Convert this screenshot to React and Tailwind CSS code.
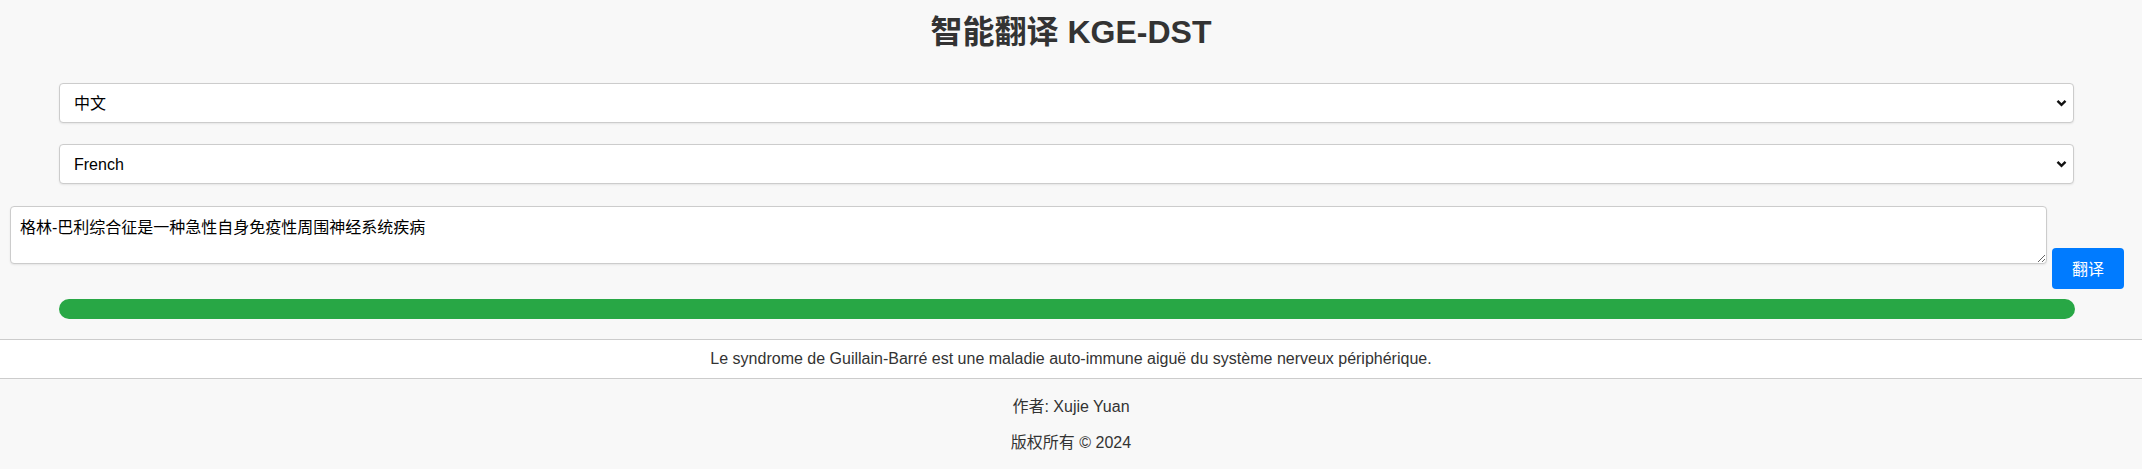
import { useState } from "react";

function Chevron() {
  return (
    <svg
      className="pointer-events-none absolute right-[7px] top-1/2 -translate-y-1/2"
      width="11"
      height="8"
      viewBox="0 0 11 8"
    >
      <path
        d="M1.5 1.8 L5.5 5.8 L9.5 1.8"
        fill="none"
        stroke="#111"
        strokeWidth="2.4"
      />
    </svg>
  );
}

function LangSelect({ value, options, onChange }) {
  return (
    <div className="relative ml-[59px] w-[2015px]">
      <select
        value={value}
        onChange={(e) => onChange(e.target.value)}
        className="block h-[40px] w-full appearance-none rounded-[4px] border border-[#cccccc] bg-white px-[14px] pt-[2px] text-[16px] text-black shadow-[0_1px_2px_rgba(0,0,0,0.08)]"
      >
        {options.map((o) => (
          <option key={o}>{o}</option>
        ))}
      </select>
      <Chevron />
    </div>
  );
}

export default function App() {
  const [source, setSource] = useState("中文");
  const [target, setTarget] = useState("French");
  const [text, setText] = useState(
    "格林-巴利综合征是一种急性自身免疫性周围神经系统疾病"
  );

  return (
    <div
      className="min-h-screen bg-[#f8f8f8] text-[#333333]"
      style={{ fontFamily: '"Liberation Sans", Arial, "Noto Sans CJK SC", sans-serif' }}
    >
      <h1 className="pt-[14px] text-center text-[32px] font-bold leading-[37px]">
        智能翻译 KGE-DST
      </h1>

      <div className="mt-[32px] flex flex-col gap-[21px]">
        <LangSelect
          value={source}
          options={["中文", "English", "French"]}
          onChange={setSource}
        />
        <LangSelect
          value={target}
          options={["French", "English", "中文"]}
          onChange={setTarget}
        />
      </div>

      <div className="mt-[22px] flex items-start gap-[5px] pl-[10px]">
        <textarea
          value={text}
          onChange={(e) => setText(e.target.value)}
          className="block h-[58px] w-[2037px] rounded-[4px] border border-[#cccccc] bg-white pl-[9px] pr-[10px] pt-[11px] pb-[4px] text-[16px] leading-[20px] text-black shadow-[0_1px_2px_rgba(0,0,0,0.08)]"
        />
        <button className="mt-[42px] h-[41px] w-[72px] rounded-[4px] bg-[#007bff] pt-[2px] text-[16px] text-white">
          翻译
        </button>
      </div>

      <div className="ml-[59px] mt-[10px] h-[20px] w-[2016px] rounded-full bg-[#28a745]" />

      <div className="mt-[20px] border-y border-[#cccccc] bg-white py-[10px] text-center text-[16px] leading-[18px]">
        Le syndrome de Guillain-Barré est une maladie auto-immune aiguë du système nerveux périphérique.
      </div>

      <footer className="mt-[19px] flex flex-col items-center gap-[18px] text-[16px] leading-[18px]">
        <p>作者: Xujie Yuan</p>
        <p>版权所有 © 2024</p>
      </footer>
    </div>
  );
}
